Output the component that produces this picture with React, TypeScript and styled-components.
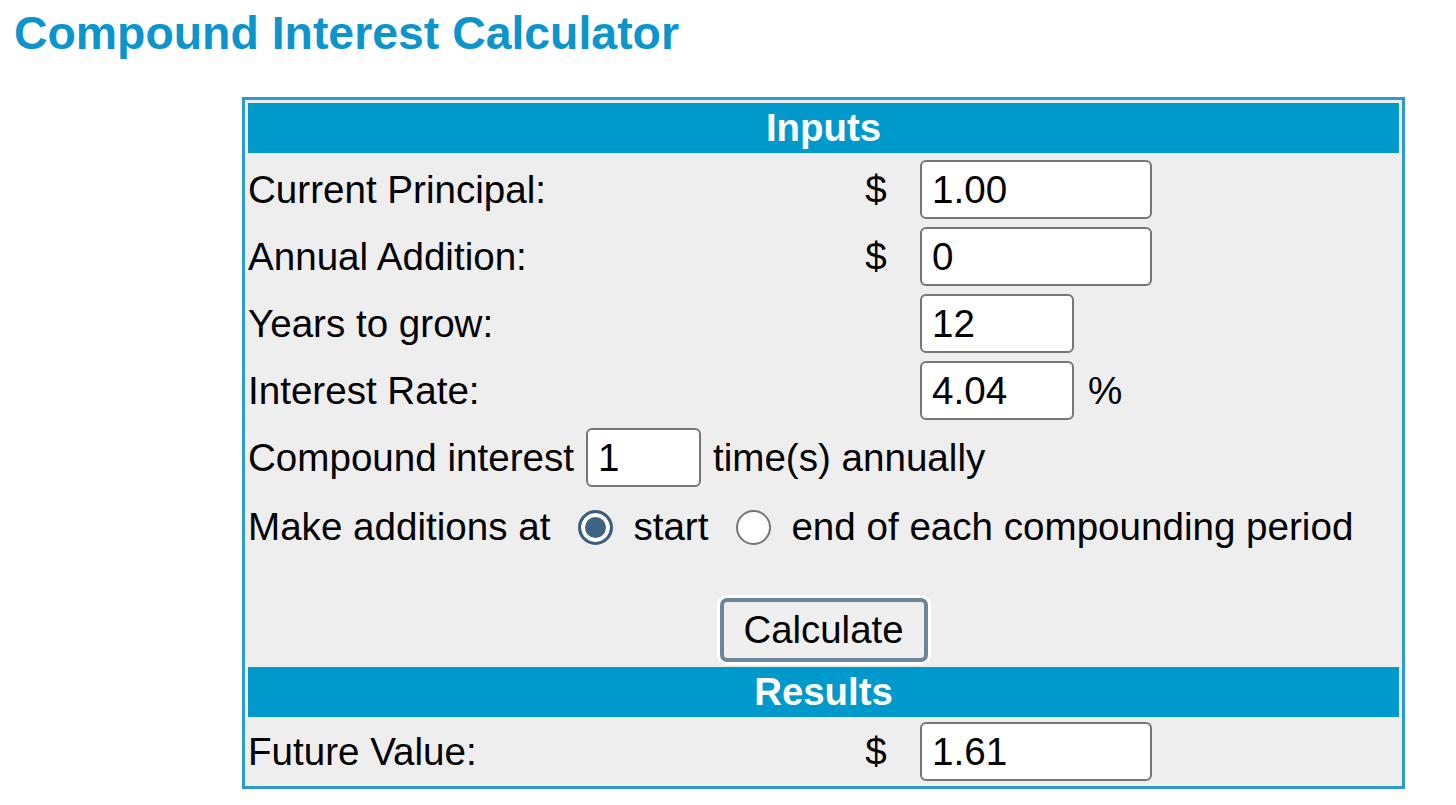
import styled, { createGlobalStyle } from "styled-components";

const GlobalStyle = createGlobalStyle`
  body {
    margin: 0;
    background: #ffffff;
    font-family: "Liberation Sans", Arial, Helvetica, sans-serif;
    color: #000000;
  }
`;

const Title = styled.h1`
  margin: 6px 0 0 14px;
  font-size: 46.4px;
  line-height: 54px;
  font-weight: bold;
  color: #0b95cc;
`;

const Panel = styled.div`
  box-sizing: border-box;
  width: 1163px;
  margin: 37px 0 0 242px;
  border: 3px solid #2c9bd2;
  padding: 3px;
  background: #eeeeee;
  display: flex;
  flex-direction: column;
`;

const SectionHeader = styled.div<{ $gapBefore?: number }>`
  height: 50px;
  margin-top: ${(p) => p.$gapBefore ?? 0}px;
  background: #0099cc;
  color: #ffffff;
  font-size: 38.4px;
  font-weight: bold;
  display: flex;
  align-items: center;
  justify-content: center;
`;

const Row = styled.div<{ $height: number; $top?: number }>`
  height: ${(p) => p.$height}px;
  margin-top: ${(p) => p.$top ?? 0}px;
  display: flex;
  align-items: center;
  font-size: 38.6px;
  white-space: nowrap;
`;

const Label = styled.div`
  width: 600px;
  flex-shrink: 0;
`;

const Currency = styled.div`
  width: 56px;
  text-align: center;
  flex-shrink: 0;
`;

const Spacer = styled.div`
  width: 56px;
  flex-shrink: 0;
`;

const Field = styled.input<{ $width: number; $left?: number; $right?: number }>`
  box-sizing: border-box;
  width: ${(p) => p.$width}px;
  height: 59px;
  margin: 0 ${(p) => p.$right ?? 0}px 0 ${(p) => p.$left ?? 16}px;
  padding: 0 10px;
  border: 2px solid #767676;
  border-radius: 6px;
  background: #ffffff;
  font-family: "Liberation Sans", Arial, sans-serif;
  font-size: 38.6px;
  color: #000000;
  outline: none;
`;

const Radio = styled.input.attrs({ type: "radio" })`
  appearance: none;
  box-sizing: border-box;
  width: 35px;
  height: 35px;
  margin: 0 20px 0 28px;
  border-radius: 50%;
  border: 2px solid #767676;
  background: #ffffff;

  &:checked {
    border: 3px solid #3a5f7e;
    background: #3f6384;
    box-shadow: inset 0 0 0 4px #ffffff;
  }
`;

const ButtonRow = styled.div`
  display: flex;
  justify-content: center;
  padding: 35px 0 2px;
`;

const CalcButton = styled.button`
  box-sizing: border-box;
  width: 208px;
  height: 64px;
  border: 4px solid #6c8599;
  border-radius: 7px;
  background: #efefef;
  box-shadow: 0 0 0 3px #ffffff;
  font-family: "Liberation Sans", Arial, sans-serif;
  font-size: 38.4px;
  color: #000000;
  padding: 0;
`;

const App = () => {
  return (
    <>
      <GlobalStyle />
      <Title>Compound Interest Calculator</Title>
      <Panel>
        <SectionHeader>Inputs</SectionHeader>
        <Row $height={67} $top={3}>
          <Label>Current Principal:</Label>
          <Currency>$</Currency>
          <Field $width={232} defaultValue="1.00" />
        </Row>
        <Row $height={67}>
          <Label>Annual Addition:</Label>
          <Currency>$</Currency>
          <Field $width={232} defaultValue="0" />
        </Row>
        <Row $height={67}>
          <Label>Years to grow:</Label>
          <Spacer />
          <Field $width={154} defaultValue="12" />
        </Row>
        <Row $height={67}>
          <Label>Interest Rate:</Label>
          <Spacer />
          <Field $width={154} $right={14} defaultValue="4.04" />
          <span>%</span>
        </Row>
        <Row $height={67}>
          <span>Compound interest</span>
          <Field $width={115} $left={12} $right={12} defaultValue="1" />
          <span>time(s) annually</span>
        </Row>
        <Row $height={72}>
          <span>Make additions at</span>
          <Radio name="when" defaultChecked />
          <span>start</span>
          <Radio name="when" />
          <span>end of each compounding period</span>
        </Row>
        <ButtonRow>
          <CalcButton>Calculate</CalcButton>
        </ButtonRow>
        <SectionHeader $gapBefore={3}>Results</SectionHeader>
        <Row $height={63} $top={3}>
          <Label>Future Value:</Label>
          <Currency>$</Currency>
          <Field $width={232} defaultValue="1.61" />
        </Row>
      </Panel>
    </>
  );
};

export default App;
